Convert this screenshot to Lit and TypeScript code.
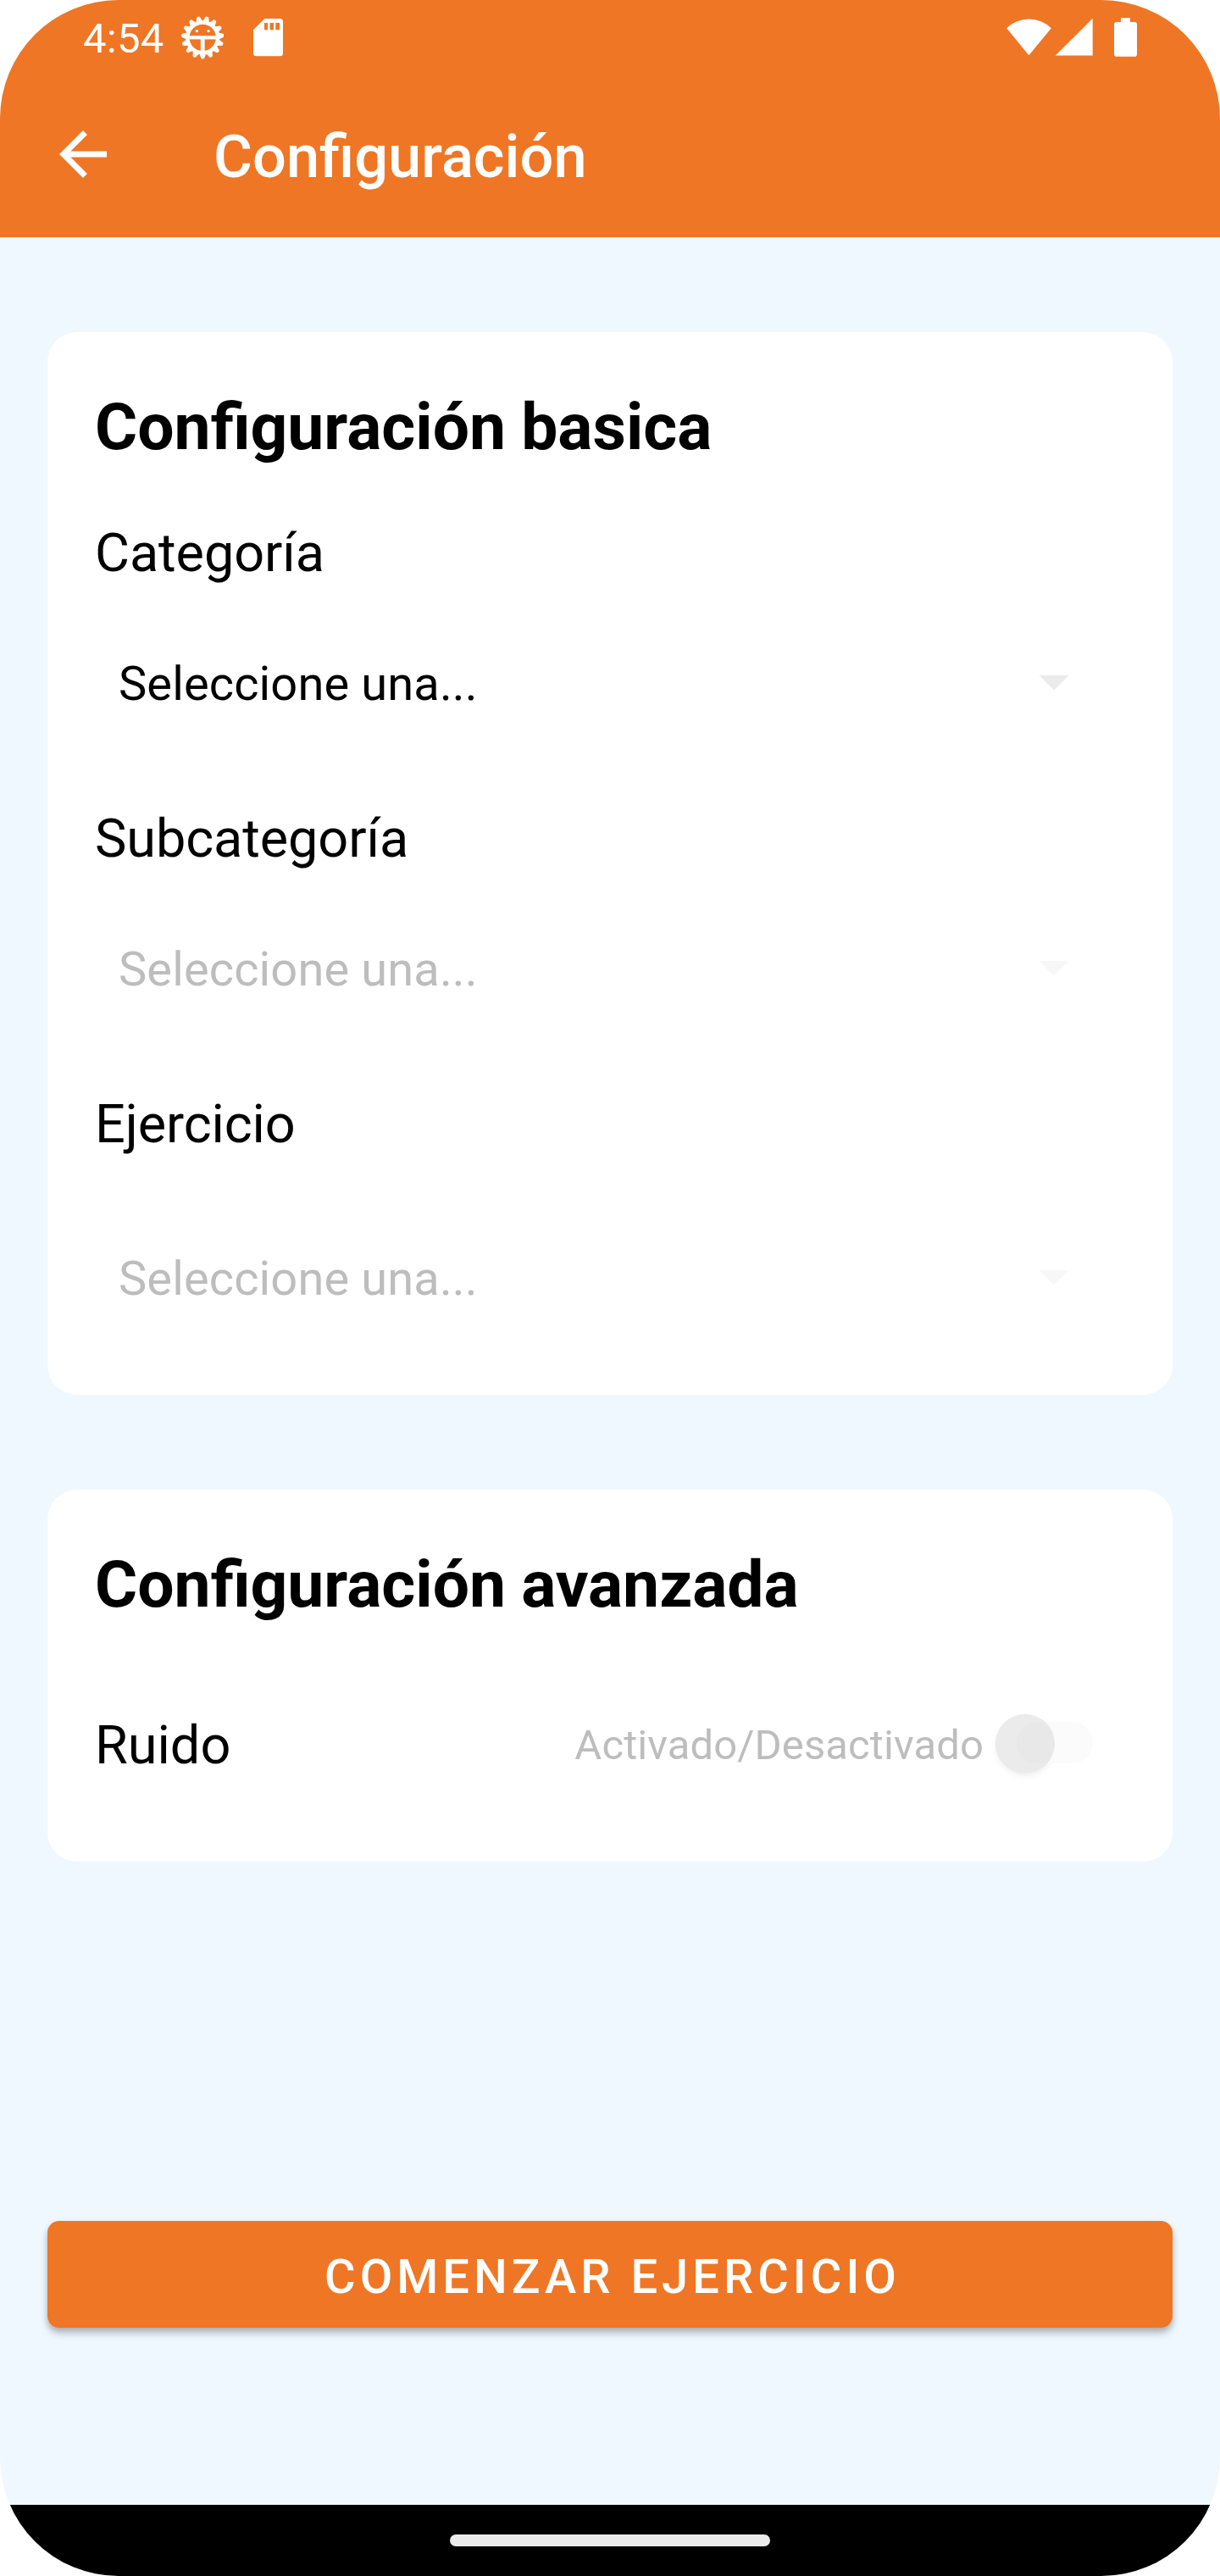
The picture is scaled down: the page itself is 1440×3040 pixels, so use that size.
import { LitElement, html, css, svg } from "lit";
import { customElement, property } from "lit/decorators.js";
import { classMap } from "lit/directives/class-map.js";

const TEETH = Array.from({ length: 15 }, (_, i) => i * 24);

@customElement("status-bar")
class StatusBar extends LitElement {
  static styles = css`
    :host {
      display: flex;
      align-items: flex-start;
      justify-content: space-between;
      height: 84px;
      padding: 0 97px 0 98px;
      box-sizing: border-box;
    }
    .group {
      display: flex;
      align-items: flex-start;
    }
    .clock {
      font-size: 49px;
      letter-spacing: 0.3px;
      line-height: 92px;
      color: #fff;
      white-space: nowrap;
      width: 116px;
    }
    svg {
      display: block;
      flex: none;
      fill: #fff;
    }
  `;

  render() {
    return html`
      <div class="group">
        <span class="clock">4:54</span>
        <svg width="50" height="84" viewBox="214 0 50 84">
          <g transform="translate(239.2 44.4)">
            ${TEETH.map(
              (a) => svg`<path transform="rotate(${a})"
                d="M-4.6 17.5L-2.4 22.9A2.4 2.4 0 0 0 2.4 22.9L4.6 17.5Z"/>`
            )}
            <path
              fill-rule="evenodd"
              d="M-20 0A20 20 0 1 1 20 0A20 20 0 1 1 -20 0ZM-15.6 0A15.6 15.6 0 1 0 15.6 0A15.6 15.6 0 1 0 -15.6 0Z"
            />
            <rect x="-16" y="-2.2" width="32" height="4.2" />
            <rect x="-2.4" y="0" width="4.8" height="17" />
            <circle cx="-6.8" cy="-7.8" r="1.7" />
            <circle cx="6.8" cy="-7.8" r="1.7" />
          </g>
        </svg>
        <svg width="70" height="84" viewBox="264 0 70 84">
          <path
            fill-rule="evenodd"
            d="M312.3 22H330.5A3.5 3.5 0 0 1 334 25.500V62.700A3.500 3.500 0 0 1 330.500 66.200H302.500A3.500 3.500 0 0 1 299 62.700V35.300ZM312 27V35.300H316V27ZM318.600 27V35.300H323V27ZM325.300 27V35.300H330V27Z"
          />
        </svg>
      </div>
      <div class="group">
        <svg width="155" height="84" viewBox="1188 0 155 84">
          <path d="M1214.400 65.300L1188.200 33.200A37.500 37.500 0 0 1 1240.800 33.200Z" />
          <path d="M1289.700 21.800V65.600H1245.700Z" />
          <path
            d="M1323 21.300H1334V26H1339.200A2.800 2.800 0 0 1 1342 28.800V63.900A2.800 2.800 0 0 1 1339.200 66.700H1317.800A2.800 2.800 0 0 1 1315 63.900V28.800A2.800 2.800 0 0 1 1317.800 26H1323Z"
          />
        </svg>
      </div>
    `;
  }
}

@customElement("top-bar")
class TopBar extends LitElement {
  static styles = css`
    :host {
      display: flex;
      align-items: center;
      gap: 112px;
      height: 196px;
      padding: 0 56px;
      box-sizing: border-box;
    }
    .back {
      display: block;
      width: 84px;
      height: 84px;
      flex: none;
      fill: #fff;
    }
    .title {
      margin: 0;
      padding-top: 6px;
      font-size: 70.4px;
      font-weight: 500;
      line-height: 84px;
      color: #fff;
      white-space: nowrap;
    }
  `;

  render() {
    return html`
      <svg class="back" viewBox="0 0 24 24">
        <path d="M20 11H7.830l5.590-5.590L12 4l-8 8 8 8 1.410-1.410L7.830 13H20v-2z" />
      </svg>
      <h1 class="title">Configuración</h1>
    `;
  }
}

@customElement("select-field")
class SelectField extends LitElement {
  @property() label = "";
  @property() value = "";
  @property({ type: Boolean }) disabled = false;
  @property({ type: Boolean, reflect: true }) spaced = false;

  static styles = css`
    :host {
      display: block;
      height: 337px;
    }
    .label {
      font-size: 63px;
      letter-spacing: -0.1px;
      line-height: 84px;
      color: #000;
    }
    .control {
      display: flex;
      align-items: center;
      justify-content: space-between;
      height: 84px;
      margin-top: 67px;
      padding: 0 42px 0 28px;
    }
    :host([spaced]) .control {
      margin-top: 95px;
    }
    .value {
      padding-top: 6px;
      font-size: 56px;
      letter-spacing: 0.12px;
      line-height: 78px;
      color: #000;
      white-space: nowrap;
    }
    .arrow {
      display: block;
      width: 84px;
      height: 84px;
      fill: #ebebeb;
    }
    .off .value {
      color: #bdbdbd;
    }
    .off .arrow {
      fill: #f7f7f7;
    }
  `;

  render() {
    return html`
      <div class="label">${this.label}</div>
      <div class=${classMap({ control: true, off: this.disabled })}>
        <span class="value">${this.value}</span>
        <svg class="arrow" viewBox="0 0 24 24"><path d="M7 10l5 5 5-5z" /></svg>
      </div>
    `;
  }
}

@customElement("toggle-field")
class ToggleField extends LitElement {
  @property() label = "";
  @property() caption = "";

  static styles = css`
    :host {
      display: flex;
      align-items: center;
      justify-content: space-between;
      height: 84px;
    }
    .label {
      font-size: 63px;
      line-height: 84px;
      color: #000;
    }
    .switch {
      display: flex;
      align-items: center;
    }
    .caption {
      font-size: 49px;
      letter-spacing: 0.1px;
      line-height: 80px;
      color: #bdbdbd;
      white-space: nowrap;
      margin-right: 3px;
    }
    .toggle {
      display: block;
      width: 164px;
      height: 84px;
      overflow: visible;
    }
    .shadow {
      filter: blur(3px);
    }
  `;

  render() {
    return html`
      <span class="label">${this.label}</span>
      <span class="switch">
        <span class="caption">${this.caption}</span>
        <svg class="toggle" viewBox="1164 2018 164 84">
          <circle class="shadow" cx="1209.800" cy="2062" r="34" fill="#f0f0f0" />
          <rect x="1200" y="2032" width="90" height="49" rx="24.500" fill="#fbfbfb" />
          <circle cx="1209.800" cy="2057.800" r="35" fill="#ebebeb" />
          <path
            d="M1224.500 2032H1233.600A35 35 0 0 1 1236 2081H1224.500A24.500 24.500 0 0 1 1224.500 2032Z"
            fill="#e8e8e8"
          />
        </svg>
      </span>
    `;
  }
}

@customElement("app-root")
class AppRoot extends LitElement {
  static styles = css`
    :host {
      display: block;
      background: #fff;
      font-family: Roboto, sans-serif;
    }
    .screen {
      display: flex;
      flex-direction: column;
      width: 1440px;
      height: 3040px;
      border-radius: 140px;
      overflow: hidden;
      background: #f0f8ff;
    }
    .header {
      height: 280px;
      flex: none;
      background: #ef7625;
    }
    .content {
      display: flex;
      flex-direction: column;
      flex: 1;
      padding: 112px 56px 0;
    }
    .card {
      box-sizing: border-box;
      flex: none;
      padding: 61px 56px 0;
      border-radius: 35px;
      background: #fff;
    }
    .basic {
      height: 1254px;
    }
    .advanced {
      height: 439px;
      margin-top: 112px;
    }
    .heading {
      margin: 0;
      font-size: 76.8px;
      font-weight: 700;
      word-spacing: -1px;
      line-height: 102px;
      color: #000;
      white-space: nowrap;
    }
    .fields {
      margin-top: 56px;
    }
    .advanced .fields {
      margin-top: 97px;
    }
    .start {
      display: block;
      flex: none;
      height: 126px;
      margin: 424px 0 0;
      padding: 6px 0 0 6px;
      border: 0;
      border-radius: 14px;
      background: #ef7625;
      box-shadow: 0 7px 10px rgba(0, 0, 0, 0.2), 0 3px 7px rgba(0, 0, 0, 0.14);
      font-family: inherit;
      font-size: 56px;
      font-weight: 500;
      letter-spacing: 5.05px;
      line-height: 120px;
      color: #fff;
      white-space: nowrap;
    }
    .nav {
      display: flex;
      flex: none;
      align-items: center;
      justify-content: center;
      height: 84px;
      background: #000;
    }
    .pill {
      width: 378px;
      height: 14px;
      border-radius: 7px;
      background: #ebebeb;
    }
  `;

  render() {
    return html`
      <div class="screen">
        <header class="header">
          <status-bar></status-bar>
          <top-bar></top-bar>
        </header>
        <main class="content">
          <section class="card basic">
            <h2 class="heading">Configuración basica</h2>
            <div class="fields">
              <select-field label="Categoría" value="Seleccione una..."></select-field>
              <select-field label="Subcategoría" value="Seleccione una..." disabled></select-field>
              <select-field label="Ejercicio" value="Seleccione una..." disabled spaced></select-field>
            </div>
          </section>
          <section class="card advanced">
            <h2 class="heading">Configuración avanzada</h2>
            <div class="fields">
              <toggle-field label="Ruido" caption="Activado/Desactivado"></toggle-field>
            </div>
          </section>
          <button class="start">COMENZAR EJERCICIO</button>
        </main>
        <footer class="nav"><div class="pill"></div></footer>
      </div>
    `;
  }
}
